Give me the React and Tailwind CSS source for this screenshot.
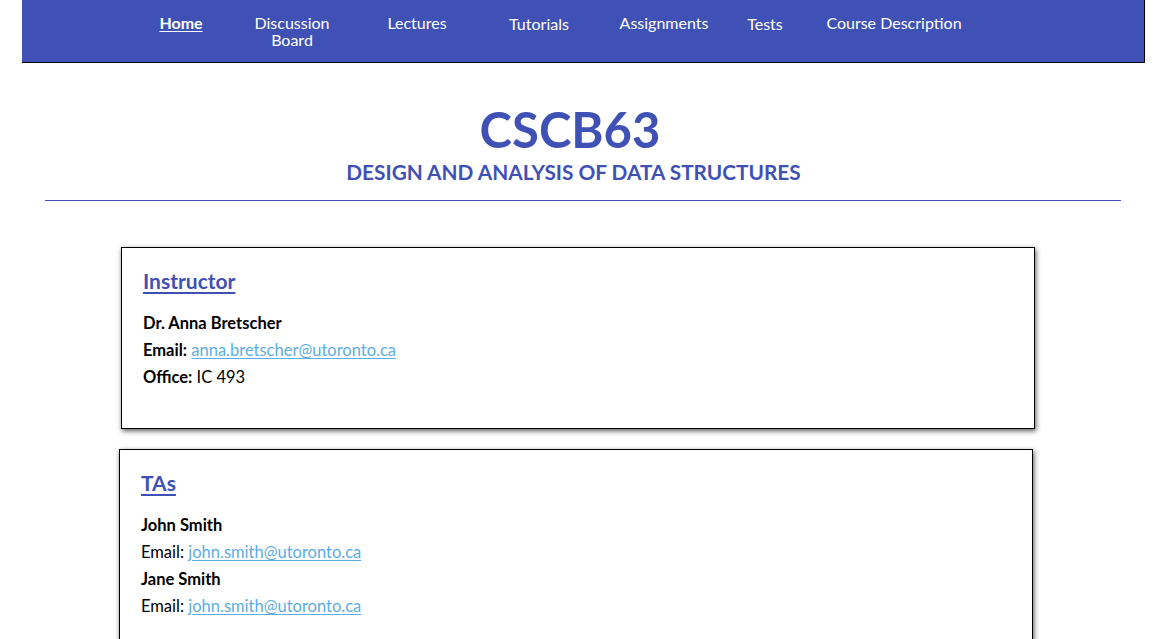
import React from 'react';

const navItems = [
  { label: 'Home', w: 'w-[110px]', active: true },
  { label: 'Discussion Board', w: 'w-[112px]', lines: ['Discussion', 'Board'] },
  { label: 'Lectures', w: 'w-[138px]' },
  { label: 'Tutorials', w: 'w-[106px]', low: true },
  { label: 'Assignments', w: 'w-[144px]' },
  { label: 'Tests', w: 'w-[58px]', low: true },
  { label: 'Course Description', w: 'w-[200px]' },
];

const body = { fontFamily: 'Lato, "Noto Sans", sans-serif' };

const Card = ({ title, shift, children }) => (
  <section
    className={`w-[914px] border border-black bg-white shadow-[1px_2px_5px_rgba(0,0,0,0.65)] pt-[19px] pb-[37px] pl-[21px] ${shift}`}
  >
    <h2 className="text-[21px] leading-[27px] font-bold text-[#3f51b5] underline underline-offset-[3px] decoration-[1.5px]">
      {title}
    </h2>
    <div className="mt-[16px] text-[16.5px] leading-[27px] text-black">{children}</div>
  </section>
);

const Mail = ({ to }) => (
  <a href={`mailto:${to}`} className="text-[#5dade2] underline underline-offset-2">
    {to}
  </a>
);

export default function App() {
  return (
    <div className="min-h-screen bg-white" style={body}>
      {/* top nav */}
      <nav className="ml-[22px] w-[1123px] h-[63px] bg-[#3f51b5] border-b border-r border-black flex items-start pl-[104px] pt-[14px]">
        {navItems.map((it) => (
          <a
            key={it.label}
            href="#"
            className={`${it.w} text-center text-white text-[16px] leading-[17px] ${
              it.active ? 'font-bold underline underline-offset-2' : ''
            } ${it.low ? 'mt-[1px]' : ''}`}
          >
            {it.lines ? (
              <>
                {it.lines[0]}
                <br />
                {it.lines[1]}
              </>
            ) : (
              it.label
            )}
          </a>
        ))}
      </nav>

      {/* course header */}
      <header className="mx-[45px] w-[1076px] pt-[42px] text-[#3f51b5] text-center">
        <h1 className="text-[49px] leading-none font-bold pr-[26px]">CSCB63</h1>
        <p className="mt-[8px] text-[20.8px] leading-none font-bold pr-[19px]">
          DESIGN AND ANALYSIS OF DATA STRUCTURES
        </p>
        <div className="mt-[17px] h-px bg-[#3f51b5]" />
      </header>

      <main className="pt-[46px] pb-10 flex flex-col gap-[20px]">
        <Card title="Instructor" shift="ml-[121px]">
          <p className="font-bold">Dr. Anna Bretscher</p>
          <p>
            <b>Email:</b> <Mail to="anna.bretscher@utoronto.ca" />
          </p>
          <p>
            <b>Office:</b> IC 493
          </p>
        </Card>

        <Card title="TAs" shift="ml-[119px]">
          <p className="font-bold">John Smith</p>
          <p>
            Email: <Mail to="john.smith@utoronto.ca" />
          </p>
          <p className="font-bold">Jane Smith</p>
          <p>
            Email: <Mail to="john.smith@utoronto.ca" />
          </p>
        </Card>
      </main>
    </div>
  );
}
